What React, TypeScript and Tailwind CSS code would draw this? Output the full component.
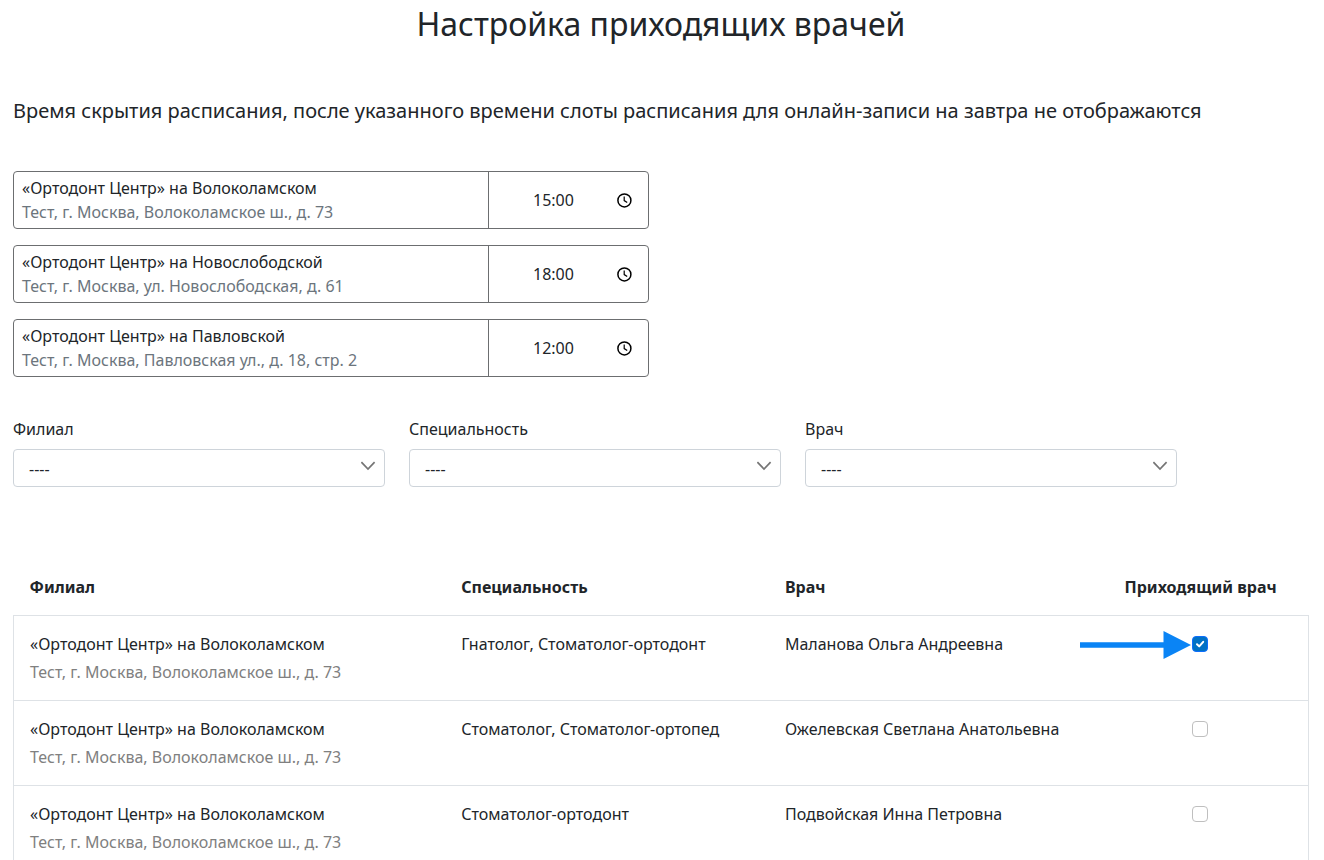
import { useState } from "react";

interface Branch {
  id: number;
  name: string;
  address: string;
  time: string;
}

interface Doctor {
  id: number;
  branch: string;
  address: string;
  specialty: string;
  name: string;
  visiting: boolean;
}

const branches: Branch[] = [
  { id: 1, name: "«Ортодонт Центр» на Волоколамском", address: "Тест, г. Москва, Волоколамское ш., д. 73", time: "15:00" },
  { id: 2, name: "«Ортодонт Центр» на Новослободской", address: "Тест, г. Москва, ул. Новослободская, д. 61", time: "18:00" },
  { id: 3, name: "«Ортодонт Центр» на Павловской", address: "Тест, г. Москва, Павловская ул., д. 18, стр. 2", time: "12:00" },
];

const initialDoctors: Doctor[] = [
  {
    id: 1,
    branch: "«Ортодонт Центр» на Волоколамском",
    address: "Тест, г. Москва, Волоколамское ш., д. 73",
    specialty: "Гнатолог, Стоматолог-ортодонт",
    name: "Маланова Ольга Андреевна",
    visiting: true,
  },
  {
    id: 2,
    branch: "«Ортодонт Центр» на Волоколамском",
    address: "Тест, г. Москва, Волоколамское ш., д. 73",
    specialty: "Стоматолог, Стоматолог-ортопед",
    name: "Ожелевская Светлана Анатольевна",
    visiting: false,
  },
  {
    id: 3,
    branch: "«Ортодонт Центр» на Волоколамском",
    address: "Тест, г. Москва, Волоколамское ш., д. 73",
    specialty: "Стоматолог-ортодонт",
    name: "Подвойская Инна Петровна",
    visiting: false,
  },
];

const filters = [
  { id: "branch", label: "Филиал" },
  { id: "specialty", label: "Специальность" },
  { id: "doctor", label: "Врач" },
];

const ClockIcon = () => (
  <svg width="16" height="16" viewBox="0 0 16 16" fill="none" stroke="#000">
    <circle cx="8.4" cy="8.4" r="6.5" strokeWidth="1.5" />
    <path d="M8.2 4.6v4l3 2" strokeWidth="1.2" />
  </svg>
);

const BranchTime = ({ branch }: { branch: Branch }) => {
  const [time, setTime] = useState(branch.time);

  return (
    <div className="flex rounded border border-[#6c6e70]">
      <label htmlFor={`time-${branch.id}`} className="flex-1 px-2 py-1">
        <span className="block">{branch.name}</span>
        <span className="block text-[#6c757d]">{branch.address}</span>
      </label>
      <div className="flex w-40 items-center justify-between border-l border-[#6c6e70] pr-4 pl-11">
        <input
          id={`time-${branch.id}`}
          type="text"
          inputMode="numeric"
          value={time}
          onChange={(e) => setTime(e.target.value)}
          className="w-16 outline-none"
        />
        <button type="button" aria-label="Выбрать время">
          <ClockIcon />
        </button>
      </div>
    </div>
  );
};

const Filter = ({ id, label }: { id: string; label: string }) => (
  <div>
    <label htmlFor={id} className="mb-2 block">
      {label}
    </label>
    <div className="relative">
      <select
        id={id}
        className="block h-[38px] w-full appearance-none rounded border border-[#ced4da] bg-white pt-0.5 pr-9 pl-[15px] outline-none"
      >
        <option>----</option>
      </select>
      <svg
        className="pointer-events-none absolute top-2 right-2 text-[#757575]"
        width="16"
        height="16"
        viewBox="0 0 16 16"
        fill="none"
        stroke="currentColor"
        strokeWidth="1.7"
      >
        <path d="M.4 5.2 7 12l6.6-6.8" />
      </svg>
    </div>
  </div>
);

const Arrow = () => (
  <svg className="pointer-events-none absolute -top-1.5 right-full" width="112" height="30" viewBox="0 0 112 30">
    <path d="M0 12.2h83.5V1L111 15 83.5 29V17.8H0z" fill="#0a84f5" />
  </svg>
);

const App = () => {
  const [doctors, setDoctors] = useState(initialDoctors);

  const toggle = (id: number) => {
    setDoctors(doctors.map((d) => (d.id === id ? { ...d, visiting: !d.visiting } : d)));
  };

  return (
    <main className="min-h-screen bg-white pr-[15px] pl-[13px] font-['Noto_Sans',sans-serif] text-base text-[#212529]">
      <h1 className="pt-1 text-center text-[32px] leading-10">Настройка приходящих врачей</h1>
      <h2 className="mt-[52px] text-xl leading-[30px]">
        Время скрытия расписания, после указанного времени слоты расписания для онлайн-записи на завтра не отображаются
      </h2>

      {/* Closing time per branch */}
      <div className="mt-[45px] grid grid-cols-2 gap-6">
        <div className="flex flex-col gap-4">
          {branches.map((branch) => (
            <BranchTime key={branch.id} branch={branch} />
          ))}
        </div>
      </div>

      {/* Filters */}
      <div className="mt-10 grid w-11/12 grid-cols-3 gap-6 pr-6">
        {filters.map((filter) => (
          <Filter key={filter.id} id={filter.id} label={filter.label} />
        ))}
      </div>

      {/* Doctors */}
      <table className="mt-[72px] w-full table-fixed border-collapse text-left">
        <thead>
          <tr className="leading-7">
            <th className="w-4/12 px-4 py-3.5 font-bold">Филиал</th>
            <th className="w-3/12 px-4 py-3.5 font-bold">Специальность</th>
            <th className="w-3/12 px-4 py-3.5 font-bold">Врач</th>
            <th className="w-2/12 px-4 py-3.5 text-center font-bold">Приходящий врач</th>
          </tr>
        </thead>
        <tbody>
          {doctors.map((doctor) => (
            <tr key={doctor.id} className="border border-[#dee2e6] align-top leading-7">
              <td className="px-4 py-3.5">
                <div>{doctor.branch}</div>
                <div className="text-[#808080]">{doctor.address}</div>
              </td>
              <td className="px-4 py-3.5">{doctor.specialty}</td>
              <td className="px-4 py-3.5">{doctor.name}</td>
              <td className="px-4 py-3.5">
                <div className="flex h-7 items-center justify-center">
                  <div className="relative size-4">
                    <input
                      type="checkbox"
                      aria-label={`Приходящий врач: ${doctor.name}`}
                      checked={doctor.visiting}
                      onChange={() => toggle(doctor.id)}
                      className="block size-4 appearance-none rounded border border-[#bfbfbf] bg-white checked:border-[#0d6efd] checked:bg-[#0071c5]"
                    />
                    {doctor.visiting && (
                      <svg
                        className="pointer-events-none absolute inset-0"
                        width="16"
                        height="16"
                        viewBox="0 0 16 16"
                        fill="none"
                        stroke="#fff"
                        strokeWidth="2"
                        strokeLinecap="round"
                        strokeLinejoin="round"
                      >
                        <path d="m5 8.2 2.2 2.2 4-4.6" />
                      </svg>
                    )}
                    {doctor.id === 1 && <Arrow />}
                  </div>
                </div>
              </td>
            </tr>
          ))}
        </tbody>
      </table>
    </main>
  );
};

export default App;
